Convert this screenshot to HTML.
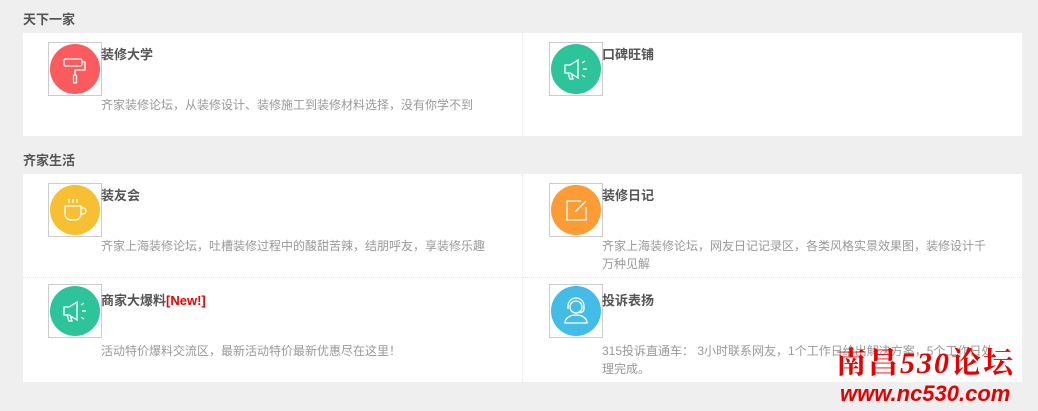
<!DOCTYPE html>
<html><head><meta charset="utf-8"><style>
*{margin:0;padding:0;box-sizing:border-box}
body{width:1038px;height:411px;background:#efefef;font-family:"Liberation Sans","Noto Sans CJK SC",sans-serif;position:relative;overflow:hidden}
.h{position:absolute;left:23px;font-size:13px;font-weight:bold;color:#555}
.panel{position:absolute;left:23px;width:999px;background:#fff}
.cell{position:absolute;width:499px}
.ib{position:absolute;width:54px;height:54px;border:1px solid #ccc;left:25px;top:9px}
.c{position:absolute;left:1px;top:1px;width:50px;height:50px;border-radius:50%}
.c svg{width:50px;height:50px}
.t{position:absolute;left:78px;top:11px;font-size:13px;font-weight:bold;color:#555}
.d{position:absolute;left:78px;top:63px;font-size:12px;color:#999;width:395px;line-height:18px}
.vl{position:absolute;left:499px;top:0;bottom:0;border-left:1px dotted #e6e6e6}
.hl{position:absolute;left:0;right:0;border-top:1px dotted #e6e6e6}
.wm{position:absolute;color:#e60000;font-weight:bold}
</style></head><body>
<div class="h" style="top:9px">天下一家</div>
<div class="panel" style="top:33px;height:103px">
 <div class="vl"></div>
 <div class="cell" style="left:0;top:0">
  <div class="ib"><div class="c" style="background:#fb5b5e"><svg viewBox="0 0 50 50" fill="none" stroke="#fff" stroke-width="1.3"><rect x="14" y="15" width="18" height="7" rx="1.5"/><path d="M32 18h3v8H25v5"/><rect x="23.5" y="31" width="3" height="8" rx="1"/></svg></div></div>
  <div class="t">装修大学</div>
  <div class="d">齐家装修论坛，从装修设计、装修施工到装修材料选择，没有你学不到</div>
 </div>
 <div class="cell" style="left:501px;top:0">
  <div class="ib"><div class="c" style="background:#2dc49c"><svg viewBox="0 0 50 50" fill="none" stroke="#fff" stroke-width="1.3"><path d="M14 21h5l8-5v18l-8-5h-5z M17 29l2 6h3l-2-6"/><path d="M31 19l3-2M32 25h4M31 31l3 2"/></svg></div></div>
  <div class="t">口碑旺铺</div>
 </div>
</div>
<div class="h" style="top:150px">齐家生活</div>
<div class="panel" style="top:174px;height:208px">
 <div class="vl"></div>
 <div class="hl" style="top:103px"></div>
 <div class="cell" style="left:0;top:0">
  <div class="ib"><div class="c" style="background:#f7bf32"><svg viewBox="0 0 50 50" fill="none" stroke="#fff" stroke-width="1.3"><path d="M15 21h16v8a6 6 0 0 1-6 6h-4a6 6 0 0 1-6-6z M31 23h2a3 3 0 0 1 0 6h-2"/><path d="M19 14v4M23 14v4M27 14v4"/></svg></div></div>
  <div class="t">装友会</div>
  <div class="d">齐家上海装修论坛，吐槽装修过程中的酸甜苦辣，结朋呼友，享装修乐趣</div>
 </div>
 <div class="cell" style="left:501px;top:0">
  <div class="ib"><div class="c" style="background:#fd9b34"><svg viewBox="0 0 50 50" fill="none" stroke="#fff" stroke-width="1.3"><path d="M30 16H16v19h19V22"/><path d="M24 27l11-11"/></svg></div></div>
  <div class="t">装修日记</div>
  <div class="d">齐家上海装修论坛，网友日记记录区，各类风格实景效果图，装修设计千万种见解</div>
 </div>
 <div class="cell" style="left:0;top:104px">
  <div class="ib" style="top:6px"><div class="c" style="background:#2dc49c"><svg viewBox="0 0 50 50" fill="none" stroke="#fff" stroke-width="1.3"><path d="M14 21h5l8-5v18l-8-5h-5z M17 29l2 6h3l-2-6"/><path d="M31 19l3-2M32 25h4M31 31l3 2"/></svg></div></div>
  <div class="t" style="top:12px">商家大爆料<span style="color:#e00">[New!]</span></div>
  <div class="d" style="top:64px">活动特价爆料交流区，最新活动特价最新优惠尽在这里！</div>
 </div>
 <div class="cell" style="left:501px;top:104px">
  <div class="ib" style="top:6px"><div class="c" style="background:#44bde6"><svg viewBox="0 0 50 50" fill="none" stroke="#fff" stroke-width="1.3"><circle cx="25" cy="21" r="6"/><path d="M17 23v-3a8 8 0 0 1 16 0v3M33 23a4 4 0 0 1-6 3"/><path d="M14 37c0-5 5-8 11-8s11 3 11 8z"/></svg></div></div>
  <div class="t" style="top:12px">投诉表扬</div>
  <div class="d" style="top:64px">315投诉直通车： 3小时联系网友，1个工作日给出解决方案，5个工作日处理完成。</div>
 </div>
</div>
<div class="wm" style="left:836px;top:346px;font-size:30px;letter-spacing:2px;line-height:36px;font-family:'Liberation Serif','Noto Serif CJK SC',serif">南昌<i>530</i>论坛</div>
<div class="wm" style="left:840px;top:382px;font-size:22px;line-height:24px;font-style:italic;font-family:'Liberation Sans',sans-serif">www.nc530.com</div>
</body></html>
